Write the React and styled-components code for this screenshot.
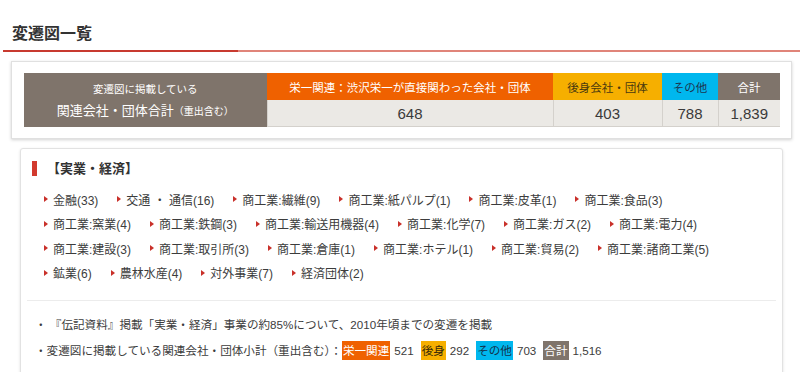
import React from 'react';
import styled, { createGlobalStyle } from 'styled-components';

const GlobalStyle = createGlobalStyle`
  body {
    margin: 0;
    background: #fff;
    font-family: "Liberation Sans", "Noto Sans CJK JP", sans-serif;
    color: #3c3c3c;
  }
`;

const COLORS = {
  brown: '#7f746b',
  orange: '#ef6100',
  yellow: '#f6af00',
  cyan: '#00b7ee',
};

const categories = [
  ['金融(33)', '交通 ・ 通信(16)', '商工業:繊維(9)', '商工業:紙パルプ(1)', '商工業:皮革(1)', '商工業:食品(3)'],
  ['商工業:窯業(4)', '商工業:鉄鋼(3)', '商工業:輸送用機器(4)', '商工業:化学(7)', '商工業:ガス(2)', '商工業:電力(4)'],
  ['商工業:建設(3)', '商工業:取引所(3)', '商工業:倉庫(1)', '商工業:ホテル(1)', '商工業:貿易(2)', '商工業:諸商工業(5)'],
  ['鉱業(6)', '農林水産(4)', '対外事業(7)', '経済団体(2)'],
];

export default function App() {
  return (
    <>
      <GlobalStyle />
      <Header>
        <Title>変遷図一覧</Title>
      </Header>
      <Rule />

      <SummaryBox>
        <SummaryTable>
          <colgroup>
            <col style={{ width: 243 }} />
            <col style={{ width: 286 }} />
            <col style={{ width: 109 }} />
            <col style={{ width: 56 }} />
            <col style={{ width: 62 }} />
          </colgroup>
          <tbody>
            <tr>
              <LabelCell rowSpan={2}>
                <small>変遷図に掲載している</small>
                <span>
                  関連会社・団体合計<em>（重出含む）</em>
                </span>
              </LabelCell>
              <HeadCell $bg={COLORS.orange} $fg="#fff">栄一関連：渋沢栄一が直接関わった会社・団体</HeadCell>
              <HeadCell $bg={COLORS.yellow} $fg="#4a3a10">後身会社・団体</HeadCell>
              <HeadCell $bg={COLORS.cyan} $fg="#1d3550">その他</HeadCell>
              <HeadCell $bg={COLORS.brown} $fg="#fff">合計</HeadCell>
            </tr>
            <tr>
              <NumCell>648</NumCell>
              <NumCell>403</NumCell>
              <NumCell>788</NumCell>
              <NumCell>1,839</NumCell>
            </tr>
          </tbody>
        </SummaryTable>
      </SummaryBox>

      <Card>
        <CardHeading>【実業・経済】</CardHeading>
        <ItemList>
          {categories.map((row, i) => (
            <ItemRow key={i}>
              {row.map((item) => (
                <Item key={item}>{item}</Item>
              ))}
            </ItemRow>
          ))}
        </ItemList>
        <Divider />
        <Notes>
          <Note>・ 『伝記資料』掲載「実業・経済」事業の約85%について、2010年頃までの変遷を掲載</Note>
          <Note>
            ・変遷図に掲載している関連会社・団体小計（重出含む）：
            <Badge $bg={COLORS.orange} $fg="#fff">栄一関連</Badge>
            <Count>521</Count>
            <Badge $bg={COLORS.yellow} $fg="#3a2c08">後身</Badge>
            <Count>292</Count>
            <Badge $bg={COLORS.cyan} $fg="#13304a">その他</Badge>
            <Count>703</Count>
            <Badge $bg={COLORS.brown} $fg="#fff">合計</Badge>
            <Count>1,516</Count>
          </Note>
        </Notes>
      </Card>
    </>
  );
}

const Header = styled.header`
  padding: 22px 12px 0;
`;

const Title = styled.h1`
  margin: 0;
  font-size: 16px;
  line-height: 24px;
  font-weight: bold;
  color: #333;
`;

const Rule = styled.div`
  margin: 4px 0 0 3px;
  height: 2px;
  background: linear-gradient(to right, #c83a30 0 235px, #e08479 235px);
`;

const SummaryBox = styled.section`
  margin: 9px 8px 0 11px;
  padding: 11px 11px 11px 12px;
  background: #fff;
  border: 1px solid #e0e0e0;
  box-shadow: 0 1px 3px rgba(0, 0, 0, 0.18);
`;

const SummaryTable = styled.table`
  width: 756px;
  border-collapse: collapse;
  table-layout: fixed;
`;

const LabelCell = styled.td`
  background: ${COLORS.brown};
  color: #fff;
  text-align: center;
  vertical-align: middle;
  padding: 3px 0 0;

  small {
    display: block;
    font-size: 10.5px;
    line-height: 18px;
    margin-bottom: 3px;
  }

  span {
    display: block;
    font-size: 13px;
    line-height: 20px;
  }

  em {
    font-style: normal;
    font-size: 10px;
  }
`;

const HeadCell = styled.td`
  height: 27px;
  padding: 0;
  background: ${(p) => p.$bg};
  color: ${(p) => p.$fg};
  font-size: 11.5px;
  text-align: center;
  vertical-align: middle;
`;

const NumCell = styled.td`
  height: 26px;
  padding: 0;
  background: #ebe9e5;
  border-left: 1px solid #d4d1cc;
  border-bottom: 1px solid #d4d1cc;
  font-size: 15px;
  color: #3a3a3a;
  text-align: center;
  vertical-align: middle;
`;

const Card = styled.section`
  margin: 9px 17px 0 20px;
  padding: 12px 6px 24px;
  background: #fff;
  border: 1px solid #e2e2e2;
  border-radius: 3px;
  box-shadow: 0 1px 3px rgba(0, 0, 0, 0.12);
`;

const CardHeading = styled.h2`
  margin: 0 0 0 5px;
  display: flex;
  align-items: center;
  gap: 10px;
  font-size: 13px;
  line-height: 15px;
  font-weight: bold;
  color: #333;

  &::before {
    content: '';
    width: 5px;
    height: 15px;
    background: #d23a2e;
  }
`;

const ItemList = styled.div`
  margin-top: 11px;
  padding-left: 17px;
`;

const ItemRow = styled.div`
  display: flex;
  gap: 19px;
  height: 24.5px;
  align-items: center;
`;

const Item = styled.span`
  display: flex;
  align-items: center;
  gap: 5px;
  font-size: 12px;
  color: #3c3c3c;
  white-space: nowrap;

  &::before {
    content: '';
    border-left: 4px solid #c9302a;
    border-top: 3.5px solid transparent;
    border-bottom: 3.5px solid transparent;
  }
`;

const Divider = styled.hr`
  margin: 15px 0 0;
  border: 0;
  border-top: 1px solid #ececec;
`;

const Notes = styled.div`
  margin-top: 10px;
  padding-left: 8px;
`;

const Note = styled.p`
  margin: 0;
  display: flex;
  align-items: center;
  height: 26px;
  font-size: 11.6px;
  color: #3c3c3c;
  white-space: nowrap;
`;

const Badge = styled.span`
  padding: 1px 1px;
  line-height: 17px;
  background: ${(p) => p.$bg};
  color: ${(p) => p.$fg};
`;

const Count = styled.span`
  margin: 0 7px 0 4px;
`;
